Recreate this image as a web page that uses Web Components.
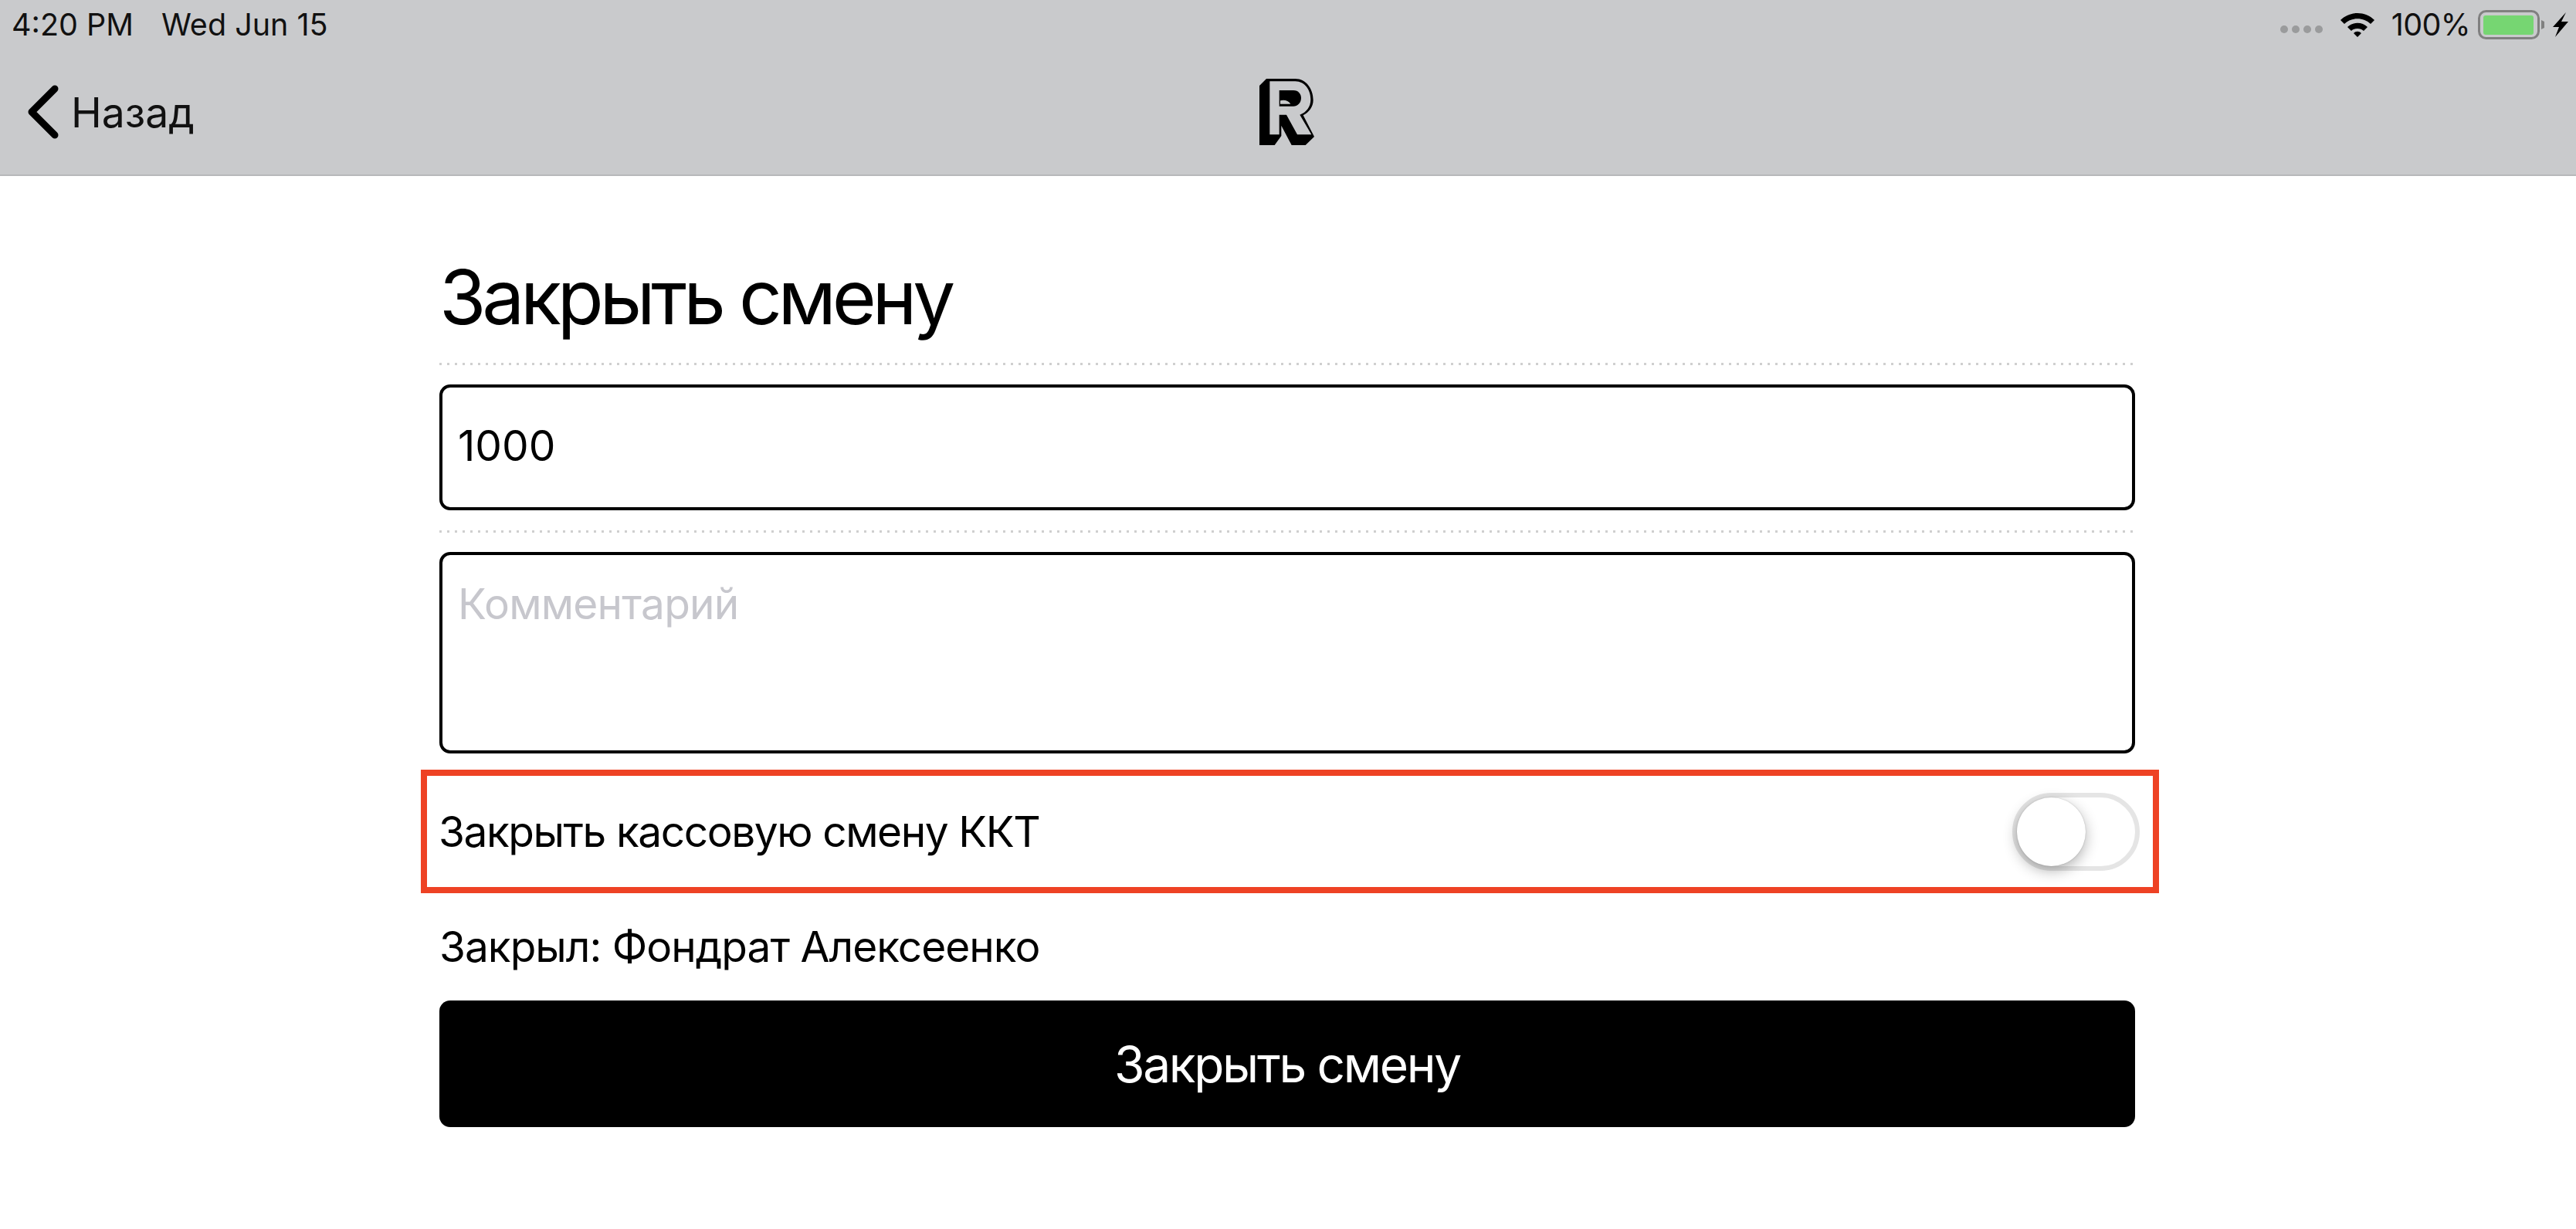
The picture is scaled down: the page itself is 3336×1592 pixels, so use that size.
<!DOCTYPE html>
<html lang="ru">
<head>
<meta charset="utf-8">
<title>Закрыть смену</title>
<style>
    html, body { margin: 0; padding: 0; background: #fff; }
    body { width: 3336px; height: 1592px; overflow: hidden; font-family: Inter, "Liberation Sans", sans-serif; color: #000; }
</style>
</head>
<body>
<status-bar time="4:20 PM" date="Wed Jun 15" battery="100%"></status-bar>
<nav-bar back="Назад"></nav-bar>
<close-shift-form>
    <form-title>Закрыть смену</form-title>
    <dotted-line></dotted-line>
    <text-box height="163">1000</text-box>
    <dotted-line></dotted-line>
    <text-box height="261" placeholder>Комментарий</text-box>
    <toggle-row>Закрыть кассовую смену ККТ</toggle-row>
    <closed-by>Закрыл: Фондрат Алексеенко</closed-by>
    <primary-button>Закрыть смену</primary-button>
</close-shift-form>

<script>
class StatusBar extends HTMLElement {
    connectedCallback() {
        this.attachShadow({ mode: 'open' });
        this.shadowRoot.innerHTML = `
            <style>
                :host { display: flex; align-items: center; height: 64px; padding: 0 9px 0 15px; background: #c9cacc; font-size: 39.5px; color: #111; }
                .date { margin-left: 36px; }
                .right { margin-left: auto; display: flex; align-items: center; }
                .dots { display: flex; gap: 5px; margin-top: 12px; }
                .dots i { width: 10px; height: 10px; border-radius: 50%; background: #9a9b9c; }
                .wifi { display: block; margin-left: 22px; }
                .pct { margin-left: 21px; letter-spacing: -0.6px; }
                .batt { display: block; margin-left: 10px; }
            </style>
            <span>${this.getAttribute('time')}</span>
            <span class="date">${this.getAttribute('date')}</span>
            <div class="right">
                <div class="dots"><i></i><i></i><i></i><i></i></div>
                <svg class="wifi" width="46" height="34" viewBox="0 0 46 34">
                    <path d="M1 11 C13 -1 33 -1 45 11 L40 16 C31 7 15 7 6 16 Z M10 20 C17 13 29 13 36 20 L31 25 C27 21 19 21 15 25 Z M18 28 C21 25 25 25 28 28 L23 33 Z" fill="#000"/>
                </svg>
                <span class="pct">${this.getAttribute('battery')}</span>
                <svg class="batt" width="118" height="38" viewBox="0 0 118 38">
                    <rect x="1.5" y="1.5" width="77" height="35" rx="9" fill="none" stroke="#808080" stroke-width="3"/>
                    <rect x="7" y="7" width="65" height="25" rx="3" fill="#76d672"/>
                    <path d="M82 13 L86 15 V23 L82 25 Z" fill="#808080"/>
                    <path d="M114 3 L97 22 H105 L100 35 L117 15 H108 Z" fill="#000"/>
                </svg>
            </div>
        `;
    }
}

class NavBar extends HTMLElement {
    connectedCallback() {
        this.attachShadow({ mode: 'open' });
        this.shadowRoot.innerHTML = `
            <style>
                :host { display: grid; grid-template-columns: 1fr auto 1fr; align-items: center; height: 164px; box-sizing: border-box; background: #c9cacc; border-bottom: 2px solid #b7b8ba; font-size: 53.5px; color: #111; }
                .back { display: flex; align-items: center; padding-left: 33px; gap: 15px; }
                .back svg, .logo { display: block; }
                .logo { margin-left: -3px; }
            </style>
            <div class="back">
                <svg width="44" height="72" viewBox="0 0 44 72">
                    <path d="M38 6 L8 36 L38 66" fill="none" stroke="#000" stroke-width="9" stroke-linecap="round" stroke-linejoin="round"/>
                </svg>
                <span>${this.getAttribute('back')}</span>
            </div>
            <!-- Logo -->
            <svg class="logo" width="71" height="86" viewBox="93 65 213 258">
                <path d="M93 92 L120 65 H232 C275 65 302 105 302 148 C302 175 285 195 263 207 L306 290 L272 323 H218 L178 247 V287 L152 323 H93 Z" fill="#000"/>
                <path d="M133 75 H232 C270 75 292 110 292 145 C292 175 275 195 250 205 L295 282 H240 L198 205 H170 V282 H133 Z" fill="#c9cacc"/>
                <path d="M170 110 H225 C245 110 255 125 255 140 C255 160 240 172 225 172 H170 Z" fill="#000"/>
                <path d="M174 163 V150 C190 146 206 150 214 163 Z" fill="#c9cacc"/>
            </svg>
            <div></div>
        `;
    }
}

class CloseShiftForm extends HTMLElement {
    connectedCallback() {
        this.attachShadow({ mode: 'open' });
        this.shadowRoot.innerHTML = `
            <style>
                :host { display: block; width: 2196px; margin-left: 569px; }
            </style>
            <slot></slot>
        `;
    }
}

class FormTitle extends HTMLElement {
    connectedCallback() {
        this.attachShadow({ mode: 'open' });
        this.shadowRoot.innerHTML = `
            <style>
                :host { display: block; padding-top: 83px; height: 159px; font-size: 98px; line-height: 148px; letter-spacing: -5.3px; }
            </style>
            <slot></slot>
        `;
    }
}

class DottedLine extends HTMLElement {
    connectedCallback() {
        this.attachShadow({ mode: 'open' });
        this.shadowRoot.innerHTML = `
            <style>
                :host { display: block; height: 3px; margin-bottom: 25px; background: repeating-linear-gradient(90deg, #cfcfcf 0 3px, transparent 3px 10px); }
            </style>
        `;
    }
}

class TextBox extends HTMLElement {
    connectedCallback() {
        this.attachShadow({ mode: 'open' });
        this.shadowRoot.innerHTML = `
            <style>
                :host { display: block; box-sizing: border-box; height: ${this.getAttribute('height')}px; margin-bottom: 26px; padding: 42px 20px 0 20px; border: 4px solid #000; border-radius: 14px; font-size: 55px; line-height: 66px; }
                :host([placeholder]) { color: #c7c7cd; padding-top: 30px; margin-bottom: 21px; letter-spacing: -0.8px; }
            </style>
            <slot></slot>
        `;
    }
}

class ToggleRow extends HTMLElement {
    connectedCallback() {
        this.attachShadow({ mode: 'open' });
        this.shadowRoot.innerHTML = `
            <style>
                :host { display: flex; align-items: center; justify-content: space-between; box-sizing: border-box; height: 160px; margin: 0 -31px 0 -24px; padding: 0 17px 0 15px; border: 8px solid #ee4224; font-size: 55px; letter-spacing: -1.45px; }
                .switch { box-sizing: border-box; width: 165px; height: 101px; border: 6px solid #e5e5e5; border-radius: 51px; background: #fff; }
                .knob { width: 89px; height: 89px; border-radius: 50%; background: #fff; box-shadow: 0 6px 18px rgba(0, 0, 0, 0.3), 0 0 2px rgba(0, 0, 0, 0.2); }
            </style>
            <span><slot></slot></span>
            <div class="switch"><div class="knob"></div></div>
        `;
    }
}

class ClosedBy extends HTMLElement {
    connectedCallback() {
        this.attachShadow({ mode: 'open' });
        this.shadowRoot.innerHTML = `
            <style>
                :host { display: block; height: 139px; box-sizing: border-box; padding-top: 36px; font-size: 55px; line-height: 66px; letter-spacing: -1px; }
            </style>
            <slot></slot>
        `;
    }
}

class PrimaryButton extends HTMLElement {
    connectedCallback() {
        this.attachShadow({ mode: 'open' });
        this.shadowRoot.innerHTML = `
            <style>
                :host { display: flex; align-items: center; justify-content: center; height: 164px; background: #000; border-radius: 14px; color: #fff; font-size: 64px; letter-spacing: -2.3px; }
            </style>
            <slot></slot>
        `;
    }
}

customElements.define('status-bar', StatusBar);
customElements.define('nav-bar', NavBar);
customElements.define('close-shift-form', CloseShiftForm);
customElements.define('form-title', FormTitle);
customElements.define('dotted-line', DottedLine);
customElements.define('text-box', TextBox);
customElements.define('toggle-row', ToggleRow);
customElements.define('closed-by', ClosedBy);
customElements.define('primary-button', PrimaryButton);
</script>
</body>
</html>
